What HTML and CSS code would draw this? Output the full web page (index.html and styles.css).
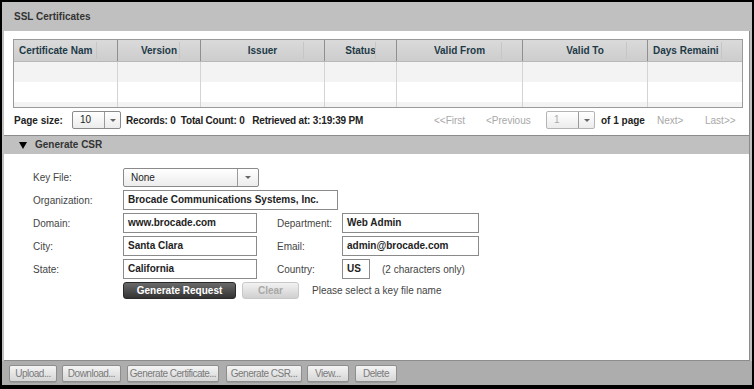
FILE: index.html
```html
<!DOCTYPE html>
<html lang="en">
<head>
  <meta charset="UTF-8">
  <title>SSL Certificates</title>
  <link rel="stylesheet" href="styles.css">
</head>
<body>

  <div class="window">
    <div class="title-bar">SSL Certificates</div>

    <div class="panel">
      <div class="grid">
        <div class="grid-head">
          <div class="col c1 left">Certificate Nam</div>
          <div class="col c2">Version</div>
          <div class="col c3">Issuer</div>
          <div class="col c4">Status</div>
          <div class="col c5">Valid From</div>
          <div class="col c6">Valid To</div>
          <div class="col c7 left">Days Remaini</div>
        </div>
        <div class="grid-body">
          <div class="grid-row alt">
            <div class="col c1"></div><div class="col c2"></div><div class="col c3"></div><div class="col c4"></div><div class="col c5"></div><div class="col c6"></div><div class="col c7"></div>
          </div>
          <div class="grid-row">
            <div class="col c1"></div><div class="col c2"></div><div class="col c3"></div><div class="col c4"></div><div class="col c5"></div><div class="col c6"></div><div class="col c7"></div>
          </div>
          <div class="grid-row alt">
            <div class="col c1"></div><div class="col c2"></div><div class="col c3"></div><div class="col c4"></div><div class="col c5"></div><div class="col c6"></div><div class="col c7"></div>
          </div>
        </div>
      </div>

      <div class="pager">
        <span class="pager-label">Page size:</span>
        <div class="combo small">
          <span class="combo-value">10</span>
          <span class="combo-btn"><i class="arrow"></i></span>
        </div>
        <span class="records">Records: 0&nbsp; Total Count: 0&nbsp;&nbsp; Retrieved at: 3:19:39 PM</span>
        <span class="spacer"></span>
        <span class="nav first">&lt;&lt;First</span>
        <span class="nav prev">&lt;Previous</span>
        <div class="combo small disabled">
          <span class="combo-value">1</span>
          <span class="combo-btn"><i class="arrow"></i></span>
        </div>
        <span class="of-page">of 1 page</span>
        <span class="nav next">Next&gt;</span>
        <span class="nav last">Last&gt;&gt;</span>
      </div>

      <div class="section-head"><i class="caret"></i>Generate CSR</div>

      <div class="csr-form">
        <div class="form-row">
          <label class="lbl">Key File:</label>
          <div class="combo key">
            <span class="combo-value">None</span>
            <span class="combo-btn"><i class="arrow"></i></span>
          </div>
        </div>
        <div class="form-row">
          <label class="lbl">Organization:</label>
          <div class="field wide">Brocade Communications Systems, Inc.</div>
        </div>
        <div class="form-row">
          <label class="lbl">Domain:</label>
          <div class="field">www.brocade.com</div>
          <label class="lbl2">Department:</label>
          <div class="field right">Web Admin</div>
        </div>
        <div class="form-row">
          <label class="lbl">City:</label>
          <div class="field">Santa Clara</div>
          <label class="lbl2">Email:</label>
          <div class="field right">admin@brocade.com</div>
        </div>
        <div class="form-row">
          <label class="lbl">State:</label>
          <div class="field">California</div>
          <label class="lbl2">Country:</label>
          <div class="field country">US</div>
          <span class="hint">(2 characters only)</span>
        </div>
        <div class="form-row actions">
          <button class="btn-dark">Generate Request</button>
          <button class="btn-light">Clear</button>
          <span class="status">Please select a key file name</span>
        </div>
      </div>
    </div>

    <div class="toolbar">
      <button class="tool w-upload">Upload...</button>
      <button class="tool w-download">Download...</button>
      <button class="tool w-gencert">Generate Certificate...</button>
      <button class="tool w-gencsr">Generate CSR...</button>
      <button class="tool w-view">View...</button>
      <button class="tool w-delete">Delete</button>
    </div>
  </div>

</body>
</html>
```

FILE: styles.css
```css
body {
  margin: 0;
  padding: 2px 2px 4px 2px;
  background: #000;
  font-family: 'Liberation Sans', Arial, sans-serif;
  font-size: 11px;
  color: #333;
}

.window {
  width: 750px;
  height: 383px;
  background: #c0c0c0;
  display: flex;
  flex-direction: column;
  overflow: hidden;
}

.title-bar {
  height: 29px;
  line-height: 30px;
  padding-left: 12px;
  font-weight: bold;
  font-size: 10px;
  color: #333;
  background: #c0c0c0;
  flex: none;
}

.panel {
  flex: 1;
  margin: 0 2px;
  background: #fff;
  border-right: 1px solid #8c8c8c;
  border-bottom: 1px solid #8c8c8c;
  display: flex;
  flex-direction: column;
}

/* table */
.grid {
  margin: 8px 0 0 9px;
  width: 728px;
  border: 1px solid #9a9a9a;
}

.grid-head, .grid-row {
  display: flex;
}

.grid-head {
  height: 21px;
  background: linear-gradient(#dadada, #cdcdcd);
  border-bottom: 1px solid #b8b8b8;
}

.grid-head .col {
  font-weight: bold;
  font-size: 10px;
  color: #1d3a48;
  line-height: 21px;
  text-align: center;
  white-space: nowrap;
  overflow: hidden;
  position: relative;
}

.grid-head .col.left {
  text-align: left;
  padding-left: 5px;
}

.grid-head .col::after {
  content: "";
  position: absolute;
  right: 20px;
  top: 2px;
  bottom: 2px;
  border-right: 1px solid #c6c6c6;
}

.grid-body {
  height: 45px;
  overflow: hidden;
}

.grid-row {
  height: 20px;
}

.grid-row.alt {
  background: #f3f3f3;
}

.col {
  border-right: 1px solid #d4d4d4;
  box-sizing: border-box;
  flex: none;
}

.grid-head .col {
  border-right-color: #8f8f8f;
}

.col.c7 { border-right: none; }

.c1 { width: 104px; }
.c2 { width: 83px; }
.c3 { width: 124px; }
.c4 { width: 72px; }
.c5 { width: 126px; }
.c6 { width: 125px; }
.c7 { width: 94px; }

/* pager */
.pager {
  display: flex;
  align-items: center;
  height: 20px;
  margin: 2px 0 0 10px;
  font-weight: bold;
  font-size: 10px;
  color: #222;
}

.pager-label { width: 58px; }

.records {
  margin-left: 5px;
  letter-spacing: -0.2px;
}

.spacer { flex: 1; }

.nav {
  font-weight: normal;
  color: #a8a8a8;
}

.first { width: 52px; }
.prev { width: 60px; }
.of-page { margin-left: 6px; width: 56px; }
.next { width: 48px; }
.last { width: 44px; }

.combo {
  display: flex;
  height: 17px;
  border: 1px solid #8a8a8a;
  border-radius: 2px;
  background: linear-gradient(#ffffff, #ececec);
  box-sizing: border-box;
}

.combo.small {
  width: 49px;
  height: 18px;
}

.combo-value {
  flex: 1;
  padding-left: 7px;
  line-height: 16px;
  font-weight: normal;
  font-size: 10px;
  color: #222;
}

.combo.disabled {
  border-color: #b4b4b4;
}

.combo.disabled .combo-value {
  color: #aaa;
}

.combo-btn {
  width: 15px;
  border-left: 1px solid #9a9a9a;
  display: flex;
  align-items: center;
  justify-content: center;
}

.arrow {
  width: 0;
  height: 0;
  border-left: 3px solid transparent;
  border-right: 3px solid transparent;
  border-top: 3px solid #666;
}

/* csr section */
.section-head {
  margin-top: 5px;
  height: 18px;
  line-height: 18px;
  background: #c0c0c0;
  border-top: 1px solid #8c8c8c;
  font-weight: bold;
  font-size: 10px;
  color: #333;
  padding-left: 15px;
  display: flex;
  align-items: center;
}

.caret {
  width: 0;
  height: 0;
  border-left: 4px solid transparent;
  border-right: 4px solid transparent;
  border-top: 7px solid #000;
  margin-right: 8px;
}

.csr-form {
  padding: 13px 0 0 29px;
}

.form-row {
  display: flex;
  align-items: center;
  height: 20px;
  margin-bottom: 3px;
}

.lbl {
  width: 90px;
  color: #444;
  font-size: 10px;
}

.lbl2 {
  width: 65px;
  margin-left: 20px;
  color: #444;
  font-size: 10px;
}

.combo.key {
  width: 136px;
  height: 19px;
}

.combo.key .combo-value {
  line-height: 17px;
}

.combo.key .combo-btn {
  width: 20px;
}

.field {
  width: 134px;
  height: 20px;
  box-sizing: border-box;
  border: 1px solid #8a8a8a;
  padding-left: 4px;
  line-height: 18px;
  font-weight: bold;
  font-size: 10px;
  color: #222;
}

.field.wide { width: 215px; }
.field.right { width: 137px; }
.field.country { width: 28px; }

.hint {
  margin-left: 12px;
  font-size: 10px;
  color: #444;
}

.form-row.actions {
  margin-top: 3px;
  padding-left: 90px;
  height: 17px;
}

.btn-dark, .btn-light {
  height: 17px;
  border-radius: 3px;
  font-family: inherit;
  font-weight: bold;
  font-size: 10px;
  padding: 0;
}

.btn-dark {
  width: 113px;
  border: 1px solid #2a2a2a;
  background: linear-gradient(#6a6a6a, #333);
  color: #fff;
}

.btn-light {
  width: 57px;
  margin-left: 6px;
  border: 1px solid #c8c8c8;
  background: linear-gradient(#f2f2f2, #d0d0d0);
  color: #a8a8a8;
}

.status {
  margin-left: 13px;
  font-size: 10px;
  color: #444;
}

/* bottom toolbar */
.toolbar {
  height: 24px;
  flex: none;
  background: #adadad;
  display: flex;
  align-items: flex-start;
  padding: 4px 0 0 7px;
  box-sizing: border-box;
}

.tool {
  height: 17px;
  padding: 0;
  margin-right: 5px;
  border: 1px solid #8d8d8d;
  border-radius: 2px;
  background: linear-gradient(#f4f4f4, #d6d6d6);
  box-shadow: 0 1px 0 #9a9a9a;
  font-family: 'Liberation Sans', sans-serif;
  font-size: 10px;
  letter-spacing: -0.5px;
  white-space: nowrap;
  color: #7a7a7a;
}

.w-upload { width: 48px; }
.w-download { width: 59px; }
.w-gencert { width: 92px; margin-left: 1px; }
.w-gencsr { width: 76px; margin-left: 2px; }
.w-view { width: 42px; }
.w-delete { width: 42px; margin-left: 1px; }
```
